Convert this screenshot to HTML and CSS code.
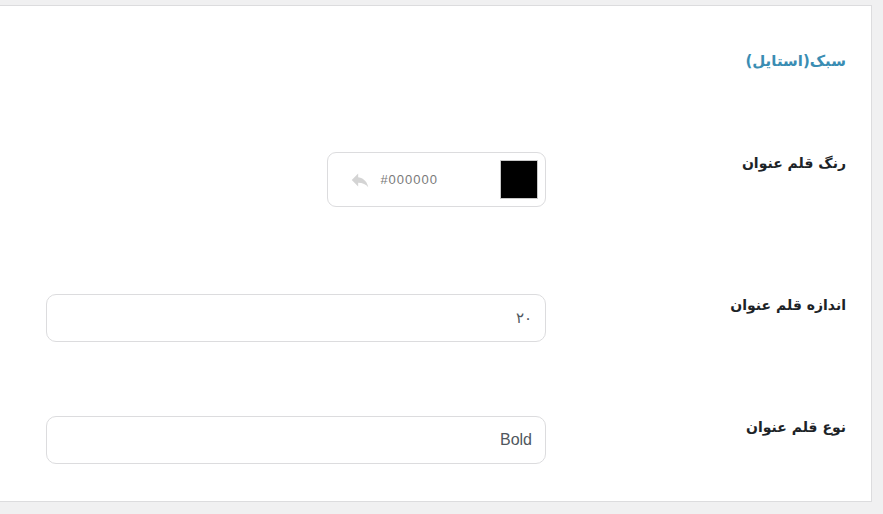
FILE: index.html
```html
<!DOCTYPE html>
<html lang="fa">
<head>
<meta charset="utf-8">
<link rel="stylesheet" href="styles.css">
</head>
<body>
<div class="panel" dir="rtl">
  <h2 class="section-title">سبک(استایل)</h2>

  <div class="row row-color">
    <div class="label">رنگ قلم عنوان</div>
    <div class="field">
      <div class="color-box">
        <span class="swatch"></span>
        <span class="hex" dir="ltr">#000000</span>
        <svg class="undo" viewBox="0 0 24 24" width="22" height="22"><path d="M10 9V5l-7 7 7 7v-4.1c5 0 8.5 1.6 11 5.1-1-5-4-10-11-11z" fill="#d4d4d4"/></svg>
      </div>
    </div>
  </div>

  <div class="row row-size">
    <div class="label">اندازه قلم عنوان</div>
    <div class="field">
      <div class="text-input">۲۰</div>
    </div>
  </div>

  <div class="row row-type">
    <div class="label">نوع قلم عنوان</div>
    <div class="field">
      <div class="text-input latin">Bold</div>
    </div>
  </div>
</div>
</body>
</html>
```

FILE: styles.css
```css
html, body {
  margin: 0;
  padding: 0;
  background: #f0f0f1;
}
body {
  width: 883px;
  height: 514px;
  overflow: hidden;
  font-family: "DejaVu Sans", "Noto Sans", sans-serif;
}
.panel {
  box-sizing: border-box;
  margin-top: 5px;
  width: 872px;
  height: 497px;
  background: #fff;
  border: 1px solid #dcdcde;
  border-left: none;
  padding: 0 25px 0 0;
  direction: rtl;
}
.section-title {
  margin: 44px 0 0 0;
  font-size: 15px;
  line-height: 22px;
  font-weight: bold;
  color: #3a8db3;
}
.row {
  display: flex;
  align-items: flex-start;
}
.row-color { margin-top: 80px; }
.row-size { margin-top: 87px; }
.row-type { margin-top: 74px; }
.label {
  width: 300px;
  flex: none;
  font-size: 14px;
  line-height: 20px;
  font-weight: bold;
  color: #1d2327;
  padding-top: 1px;
}
.field {
  flex: none;
}
.color-box {
  box-sizing: border-box;
  width: 219px;
  height: 55px;
  border: 1px solid #dcdcde;
  border-radius: 9px;
  display: flex;
  align-items: center;
  padding-right: 7px;
}
.swatch {
  width: 38px;
  height: 39px;
  background: #000;
  border: 1px solid #c8c8c8;
  box-sizing: border-box;
  border-radius: 1px;
  margin-top: -1px;
}
.hex {
  margin-right: 62px;
  font-family: "Liberation Sans", Arial, sans-serif;
  font-size: 13px;
  letter-spacing: 1px;
  color: #7a7a7a;
}
.undo {
  margin-right: 9px;
}
.text-input {
  box-sizing: border-box;
  width: 500px;
  height: 48px;
  border: 1px solid #dcdcde;
  border-radius: 10px;
  padding: 0 13px 0 0;
  display: flex;
  align-items: center;
  font-size: 15px;
  color: #50575e;
}
.text-input.latin {
  font-family: "Liberation Sans", Arial, sans-serif;
  font-size: 16px;
}
```
